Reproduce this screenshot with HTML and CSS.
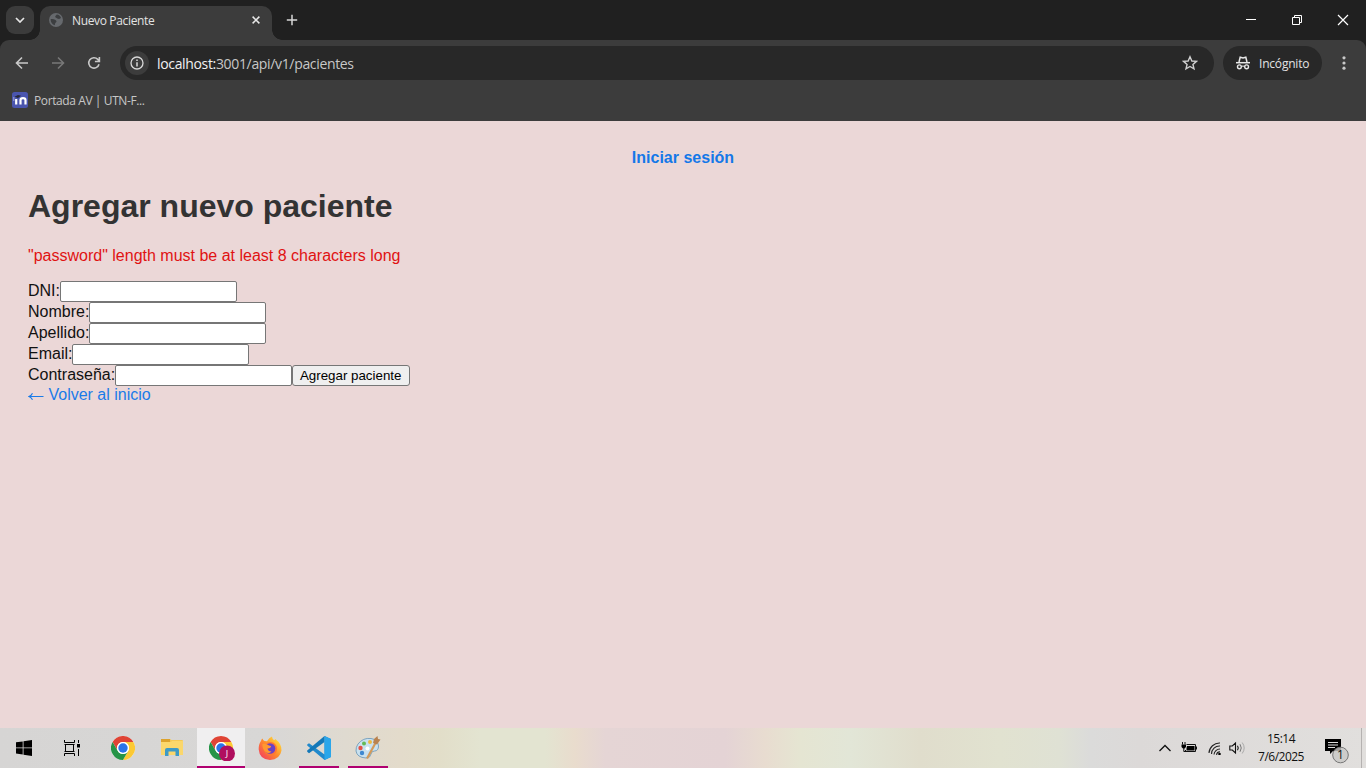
FILE: index.html
```html
<!DOCTYPE html>
<html lang="es">
<head>
<meta charset="utf-8">
<title>Nuevo Paciente</title>
<link rel="stylesheet" href="styles.css">
</head>
<body>
<svg width="0" height="0" class="defs">
  <defs>
    <g id="chrome">
      <circle cx="12" cy="12" r="12" fill="#fff"/>
      <path d="M1.6 6A12 12 0 0 1 22.4 6H12a6 6 0 0 0-5.2 9z" fill="#df4435"/>
      <path d="M22.4 6A12 12 0 0 1 12 24l5.2-9A6 6 0 0 0 12 6z" fill="#fcc934"/>
      <path d="M12 24A12 12 0 0 1 1.6 6l5.2 9A6 6 0 0 0 17.2 15z" fill="#269447"/>
      <circle cx="12" cy="12" r="6" fill="#fff"/>
      <circle cx="12" cy="12" r="4.7" fill="#2b74e8"/>
    </g>
    <linearGradient id="flame" x1="1" y1="0" x2="0" y2="1">
      <stop offset=".1" stop-color="#ffe03c"/><stop offset=".5" stop-color="#ff8a2b"/><stop offset="1" stop-color="#f0306a"/>
    </linearGradient>
  </defs>
</svg>
<header class="browser">
  <div class="tabstrip">
    <div class="tabsearch"><svg width="10" height="6" viewBox="0 0 10 6"><path d="M1 1l4 4 4-4" fill="none" stroke="#e6e6e6" stroke-width="1.7"/></svg></div>
    <div class="tab">
      <svg width="14" height="14" viewBox="0 0 14 14"><circle cx="7" cy="7" r="7" fill="#66696d"/><path d="M7.800 1.600c2 .2 3.500 1.500 4.200 3.200-.8 1.400-2.600 1.300-3.800.6-.9-.5-1.600-.4-1.900-1.300-.3-1 .7-1.500 1.500-2.500zM1.600 6.200c1.600-.4 3.600-.1 4.900.8 1.400.9 1.200 2 .3 2.500-.9.400-.6 1.300-1 2.700C3.200 11.500 1.500 9 1.600 6.200z" fill="#3c3e40"/></svg>
      <span class="tab-title">Nuevo Paciente</span>
      <svg class="tab-close" width="8" height="8" viewBox="0 0 8 8"><path d="M.6.6l6.800 6.800M7.400.6L.6 7.400" stroke="#e8e8e8" stroke-width="1.500"/></svg>
    </div>
    <svg class="newtab" width="12" height="12" viewBox="0 0 12 12"><path d="M6 .8v10.400M.8 6h10.400" stroke="#d6d6d6" stroke-width="1.500"/></svg>
    <div class="winbtns">
      <svg width="46" height="40" viewBox="0 0 46 40"><path d="M18 19.500h10" stroke="#fff"/></svg>
      <svg width="46" height="40" viewBox="0 0 46 40"><path d="M18.500 17.500h7v7h-7zM20.500 17.500v-2h7v7h-2" fill="none" stroke="#fff"/></svg>
      <svg width="46" height="40" viewBox="0 0 46 40"><path d="M18 15l10 10M28 15L18 25" stroke="#fff" stroke-width="1.200"/></svg>
    </div>
  </div>
  <div class="toolbar">
    <svg class="nav" width="36" height="36" viewBox="0 0 36 36"><path d="M24 18H13M18 12.500L12.500 18l5.500 5.500" fill="none" stroke="#c9c9c9" stroke-width="1.600"/></svg>
    <svg class="nav" width="36" height="36" viewBox="0 0 36 36"><path d="M12 18h11M18 12.500l5.500 5.500-5.500 5.500" fill="none" stroke="#787878" stroke-width="1.600"/></svg>
    <svg class="nav" width="36" height="36" viewBox="0 0 36 36"><path d="M23 19.200A5.200 5.200 0 1 1 21.800 14.400L23.200 16M23.400 12v4.500h-4.500" fill="none" stroke="#c9c9c9" stroke-width="1.600"/></svg>
    <div class="omnibox">
      <div class="info"><svg width="14" height="14" viewBox="0 0 14 14"><circle cx="7" cy="7" r="6" fill="none" stroke="#d8d8d8" stroke-width="1.300"/><path d="M7 6.200v4.200M7 3.400v1.500" stroke="#d8d8d8" stroke-width="1.500"/></svg></div>
      <span class="url"><b>localhost:</b>3001/api/v1/pacientes</span>
      <svg class="star" width="16" height="16" viewBox="0 0 16 16"><path d="M8 1.800l1.850 4.200 4.550.4-3.450 3 1.050 4.500L8 11.500l-4 2.400 1.050-4.500-3.450-3 4.550-.4z" fill="none" stroke="#d0d0d0" stroke-width="1.400"/></svg>
    </div>
    <div class="incog">
      <svg width="16" height="16" viewBox="0 0 16 16"><path d="M1 7.700h14" stroke="#e8e8e8" stroke-width="1.500"/><path d="M4 7L5.200 2.200 8 2.900l2.800-.7L12 7" fill="none" stroke="#e8e8e8" stroke-width="1.500"/><circle cx="4.400" cy="11.800" r="1.900" fill="none" stroke="#e8e8e8" stroke-width="1.400"/><circle cx="11.600" cy="11.800" r="1.900" fill="none" stroke="#e8e8e8" stroke-width="1.400"/><path d="M6.300 11.500q1.700-1 3.400 0" fill="none" stroke="#e8e8e8" stroke-width="1.200"/></svg>
      <span>Incógnito</span>
    </div>
    <svg class="dots" width="4" height="14" viewBox="0 0 4 14" fill="#c9c9c9"><circle cx="2" cy="1.800" r="1.600"/><circle cx="2" cy="7" r="1.600"/><circle cx="2" cy="12.200" r="1.600"/></svg>
  </div>
  <div class="bookmarks">
    <svg width="16" height="16" viewBox="0 0 16 16"><rect width="16" height="16" rx="2.500" fill="#4a55ae"/><path d="M4.200 12.500V7M8.500 12.500V8c0-2.600 5-2.600 5 0v4.500" fill="none" stroke="#fff" stroke-width="2.200"/><path d="M2.500 4.800L6 3l3 .8L6 6z" fill="#252838"/><path d="M1.800 5v4" stroke="#c5c8ea" stroke-width=".7"/></svg>
    <span>Portada AV | UTN-F...</span>
  </div>
</header>
<main class="page">
  <nav class="session"><a>Iniciar sesión</a></nav>
  <h1>Agregar nuevo paciente</h1>
  <p class="error">"password" length must be at least 8 characters long</p>
  <form>
    <label class="row">DNI:<input type="text"></label>
    <label class="row">Nombre:<input type="text"></label>
    <label class="row">Apellido:<input type="text"></label>
    <label class="row">Email:<input type="text"></label>
    <div class="row"><label class="row">Contraseña:<input type="password"></label><button type="button">Agregar paciente</button></div>
  </form>
  <a class="back"><svg width="16" height="10" viewBox="0 0 16 10"><path d="M1 6.500h14.500M4.500 3.200Q3.500 5.500 1 6.500q2.500 1 3.500 3.300" fill="none" stroke="#1a7be8" stroke-width="1.100"/></svg>Volver al inicio</a>
</main>
<footer class="taskbar">
  <div class="item"><svg width="16" height="16" viewBox="0 0 16 16"><path d="M0 2.300L6.700 1.400V7.500H0zM7.500 1.300L16 0v7.500H7.500zM0 8.300h6.700v6.200L0 13.600zM7.500 8.300H16V16l-8.500-1.300z"/></svg></div>
  <div class="item view"><svg width="16" height="16" viewBox="0 0 16 16"><path d="M.5 0v2.500h10V0M.5 16v-2.500h10V16M1.500 4.500v7M9.500 4.500v7M.5 4.500h10M.5 11.500h10M14.500 0v3M14.500 9v7" fill="none" stroke="#000"/><path d="M13 4h3v3.500h-3z"/></svg></div>
  <div class="item"><svg width="24" height="24" viewBox="0 0 24 24"><use href="#chrome"/></svg></div>
  <div class="item"><svg width="22" height="20" viewBox="0 0 22 20"><path d="M0 1h9l1.500 1H21a1 1 0 0 1 1 1v14H0z" fill="#f5c955"/><path d="M0 1h9v3H0z" fill="#dda32d"/><path d="M0 4h10l1-1h11v14H0z" fill="#fbd76c"/><path d="M4 18v-6q0-2 2-2h10q2 0 2 2v6h-3.500v-4.500h-7V18z" fill="#3e9ac6"/></svg></div>
  <div class="item active"><svg width="26" height="26" viewBox="0 0 26 26"><use href="#chrome" y="1"/><circle cx="18" cy="18.500" r="8" fill="#b00f5f"/><text x="18" y="21.500" text-anchor="middle" class="profile">J</text></svg></div>
  <div class="item"><svg width="24" height="24" viewBox="0 0 24 24"><path d="M3 5q.3-2 1.500-2.500.3 1.700 2 2.500L9 5.300Q11 1.500 14 .5q0 2 2 3.800 1-.3 1.300-1.300Q24 8 23.500 14.500 22 23.500 12 24 1.500 23.500.7 13.500.5 8 3 5z" fill="url(#flame)"/><path d="M5.500 11Q8 6 13 6q6 1 6 7.500-1 6-7 6-6-.5-6.500-8.500z" fill="#ff7832"/><circle cx="12" cy="12.500" r="5.300" fill="#6a42c5"/><path d="M4.500 8Q8 7 11 9.500q2.500 0 2 1.500-1.500 1.500-3.500 1.500.5 3 4 3-3 3-6.500 0Q4 12 4.500 8z" fill="#ff9830"/></svg></div>
  <div class="item open"><svg width="24" height="24" viewBox="0 0 24 24"><path d="M17.500 0L24 3v18l-6.500 3L.2 9.500v-1L2 7.300 17.500 18.500z" fill="#2089cc"/><path d="M17.500 0v6L2 17.200.2 15.800v-1.300z" fill="#1478b8"/><path d="M17.500 0L24 3v18l-6.500 3z" fill="#2aa6ea"/></svg></div>
  <div class="item open"><svg width="26" height="24" viewBox="0 0 26 24"><path d="M3 8Q8 1.500 16 2.500q7 1 7.500 7.500 0 5-4 5-3 0-3.500 3-.5 4-5 4Q2 21.500 1 15 .8 11 3 8z" fill="#c9e1ef" stroke="#7da4bf"/><circle cx="5.500" cy="12" r="2.200" fill="#e45146"/><circle cx="9" cy="7.500" r="2" fill="#65b957"/><circle cx="15" cy="6" r="2" fill="#edba41"/><circle cx="7" cy="17" r="2.200" fill="#3e88d0"/><circle cx="12.500" cy="12.500" r="2" fill="#fff"/><path d="M12 22.500L20.500 7" stroke="#d49a58" stroke-width="2.200"/><path d="M18 7l1-4L22.500 0 23 3l2.500.5-3.500 5z" fill="#b98350"/></svg></div>
  <div class="tray">
    <svg class="chev" width="12" height="8" viewBox="0 0 12 8"><path d="M.5 7L6 1.500 11.500 7" fill="none" stroke="#111" stroke-width="1.300"/></svg>
    <svg class="bat" width="16" height="12" viewBox="0 0 16 12"><path d="M5.500 2.500h9v7H4.500V8M15.500 4.500v3M1.500 0v2.500M4 0v2.500M2.800 6v3.500H5" fill="none" stroke="#111"/><path d="M6 4h7.500v4.500H5.500V6zM.5 2.500h4.500V5L3.500 6.500H2L.5 5z"/></svg>
    <svg class="wifi" width="13" height="13" viewBox="0 0 13 13"><path d="M1 11A10.500 10.500 0 0 1 12 1M3.500 12A8 8 0 0 1 12 4M6 12.500A6 6 0 0 1 12 7M8.500 12.800A3.500 3.500 0 0 1 12 9.800" fill="none" stroke="#222" stroke-width="1.100"/><circle cx="11.500" cy="12" r="1.300"/></svg>
    <svg class="vol" width="17" height="14" viewBox="0 0 17 14"><path d="M.8 5v4h2.500L6.500 12V2L3.300 5zM8.500 4.800q1.500 2.200 0 4.400" fill="none" stroke="#111" stroke-width="1.100"/><path d="M11 3.200q2.500 3.800 0 7.600" fill="none" stroke="#777"/><path d="M13.200 1.500q4 5.500 0 11" fill="none" stroke="#aaa"/></svg>
    <div class="clock"><span class="time">15:14</span><span class="date">7/6/2025</span></div>
    <svg class="notice" width="26" height="26" viewBox="0 0 26 26"><path d="M1 1h16v12H9l-3 3v-3H1z"/><path d="M4 4.500h10M4 7h10M4 9.500h7" stroke="#ddd"/><circle cx="16.500" cy="17" r="7.800" fill="#c8c7c6" fill-opacity=".8" stroke="#777"/><text x="16.500" y="21" text-anchor="middle" class="count">1</text></svg>
  </div>
</footer>
</body>
</html>
```
FILE: styles.css
```css
* { box-sizing: border-box; }
body { margin: 0; width: 1366px; height: 768px; overflow: hidden; display: flex; flex-direction: column; font-family: "Liberation Sans", Arial, sans-serif; }
svg { display: block; flex: none; }
.defs { position: absolute; }

.browser { height: 121px; background: #202020; color: #e3e3e3; font: 12px "Open Sans", "Noto Sans", sans-serif; white-space: nowrap; }
.tabstrip { display: flex; align-items: center; height: 40px; padding-left: 6px; }
.tabsearch { display: flex; align-items: center; justify-content: center; width: 28px; height: 28px; border-radius: 9px; background: #3b3b3b; }
.tab { position: relative; display: flex; align-items: center; align-self: flex-end; width: 232px; height: 34px; margin-left: 6px; padding: 0 12px 6px 9px; border-radius: 10px 10px 0 0; background: #3c3c3c; }
.tab::before, .tab::after { content: ""; position: absolute; bottom: 0; width: 10px; height: 10px; }
.tab::before { left: -10px; background: radial-gradient(circle at 0 0, transparent 9.500px, #3c3c3c 10px); }
.tab::after { right: -10px; background: radial-gradient(circle at 100% 0, transparent 9.500px, #3c3c3c 10px); }
.tab-title { margin-left: 9px; letter-spacing: -.35px; }
.tab-close { margin-left: auto; }
.newtab { margin-left: 14px; }
.winbtns { display: flex; margin-left: auto; }
.toolbar { display: flex; flex: none; align-items: center; height: 40px; padding: 6px 20px 0 4px; border-radius: 9px 9px 0 0; background: #3c3c3c; }
.omnibox { display: flex; align-items: center; width: 1094px; height: 34px; margin-left: 8px; padding: 0 16px 0 5px; border-radius: 17px; background: #282828; }
.info { display: flex; align-items: center; justify-content: center; width: 24px; height: 24px; border-radius: 50%; background: #3c3c3c; }
.url { margin-left: 8px; font-size: 14px; letter-spacing: -.34px; color: #c7c7c7; }
.url b { font-weight: 400; color: #f1f1f1; }
.star { margin-left: auto; }
.incog { display: flex; align-items: center; width: 99px; height: 34px; margin-left: 9px; padding-left: 12px; border-radius: 17px; background: #282828; }
.incog span { margin-left: 8px; letter-spacing: -.2px; }
.dots { margin-left: auto; }
.bookmarks { display: flex; align-items: center; height: 41px; padding: 0 12px 1px; background: #3c3c3c; color: #c7c7c7; }
.bookmarks span { margin-left: 6px; letter-spacing: -.4px; }

.page { flex: 1; padding: 27px 28px 0; background: #ebd7d7; color: #111; font-size: 16px; line-height: 19px; }
.session { text-align: center; font-weight: 700; color: #1478e8; }
h1 { margin: 21px 0; font-size: 32px; line-height: 37px; color: #333; }
.error { margin: 0 0 16px; color: #e01212; }
.row { display: flex; height: 21px; }
.page input { width: 177px; height: 21px; margin: 0; padding: 1px 2px; border: 1px solid #767676; border-radius: 2px; background: #fff; }
.page button { width: 118px; height: 21px; padding: 0 1px 0 0; border: 1px solid #767676; border-radius: 3px; background: #efefef; color: #000; font: 13.333px "Liberation Sans", Arial, sans-serif; }
.back { display: flex; align-items: center; gap: 4.450px; height: 17px; color: #1a7be8; }

.taskbar { display: flex; height: 40px; background: linear-gradient(90deg, #d6d5d4 0, #d8d7d6 270px, #dfdad0 345px, #e3dbcb 400px, #e2dec9 440px, #e3e4d1 480px, #e3e4d1 545px, #e9dccd 575px, #e5d5d5 605px, #e4d3d5 725px, #e8dcd0 765px, #e5e5d2 800px, #e2e6d7 850px, #e0ddcc 920px, #e1e2d0 1000px, #dfe1d4 1060px, #dbdbda 1090px, #dcd9d8 1140px, #e1dfdd 1366px); }
.item { display: flex; align-items: center; justify-content: center; width: 48px; height: 40px; margin-right: 1px; }
.item:first-child { margin-right: 0; }
.item.view { margin-right: 3px; }
.active { background: #f0eff0; border-bottom: 2px solid #b00070; padding-top: 2px; padding-left: 2px; }
.open { background: linear-gradient(#b00070, #b00070) center bottom / 40px 2px no-repeat; }
.profile { font: 9px "Open Sans", sans-serif; fill: #fff; }
.tray { display: flex; align-items: center; margin-left: auto; margin-right: 4px; border-right: 1px solid #b5b2b1; font: 12px "Open Sans", "Noto Sans", sans-serif; color: #111; }
.chev { margin-right: 10px; }
.bat { margin-right: 11px; }
.wifi { margin-right: 8px; }
.clock { display: flex; flex-direction: column; align-items: center; width: 48px; margin: 0 19px 0 11px; line-height: 18px; letter-spacing: -.5px; }
.notice { margin: 6px 11px 0 0; }
.count { font: 12px "Open Sans", sans-serif; fill: #111; }
```
